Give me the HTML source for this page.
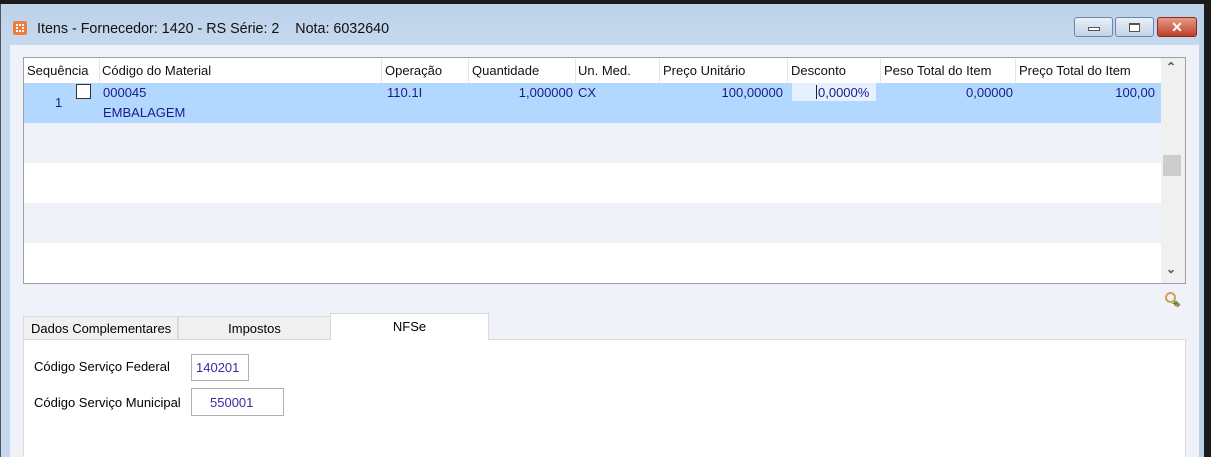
<!DOCTYPE html>
<html><head><style>
*{margin:0;padding:0;box-sizing:border-box}
body{width:1211px;height:457px;overflow:hidden;background:#bed3ea;font-family:"Liberation Sans",sans-serif;font-size:13px;color:#000;position:relative}
.a{position:absolute}
.hd{top:58px;height:25px;line-height:26px;color:#111;white-space:nowrap}
.sep{top:59px;width:1px;height:24px;background:#e4e4e4}
.c{color:#1a1a8c;white-space:nowrap}
.btn{top:17px;height:20px;border:1px solid #6e86a8;border-radius:3px;background:linear-gradient(#e9f0f8,#c3d3e6)}
</style></head><body>
<div class="a" style="left:0;top:0;width:1211px;height:4px;background:#1a1a1a"></div>
<div class="a" style="left:0;top:4px;width:1203px;height:453px;background:linear-gradient(#bcd2ea,#c6d9ee 45px);border-left:1px solid #555"></div>
<div class="a" style="left:1200px;top:4px;width:11px;height:453px;background:#1c1c1c"></div>
<div class="a" style="left:1199px;top:4px;width:5px;height:453px;background:#bcd3ea"></div>
<div class="a" style="left:13px;top:21px;width:14px;height:14px;background:#f07e3a;border-radius:2px"></div>
<div class="a" style="left:16px;top:24px;width:8px;height:8px;border:2px dotted #fff"></div>
<div class="a" style="left:37px;top:21px;font-size:14.3px;color:#111;white-space:nowrap">Itens - Fornecedor: 1420 - RS Série: 2&nbsp;&nbsp;&nbsp;&nbsp;Nota: 6032640</div>
<div class="a btn" style="left:1074px;width:39px"><div class="a" style="left:13px;top:9px;width:12px;height:4px;border:1px solid #555;background:#fff"></div></div>
<div class="a btn" style="left:1115px;width:39px"><div class="a" style="left:13px;top:5px;width:11px;height:9px;border:1px solid #555;border-top-width:2px;background:#fff"></div></div>
<div class="a" style="left:1157px;top:17px;width:40px;height:20px;border:1px solid #8a2a1a;border-radius:3px;background:linear-gradient(#e59a88,#c0402a);color:#fff;text-align:center;font-weight:bold;font-size:14px;line-height:18px">✕</div>
<div class="a" style="left:10px;top:45px;width:1189px;height:412px;background:#eff2f8"></div>
<div class="a" style="left:23px;top:57px;width:1163px;height:227px;border:1px solid #a0a0a0;background:#fff"></div>
<div class="a" style="left:24px;top:83px;width:1137px;height:40px;background:#b3d8ff"></div>
<div class="a" style="left:24px;top:123px;width:1137px;height:40px;background:#eff2f8"></div>
<div class="a" style="left:24px;top:203px;width:1137px;height:40px;background:#eff2f8"></div>
<div class="a" style="left:1161px;top:58px;width:24px;height:225px;background:#f0f0f0"></div>
<div class="a" style="left:1163px;top:155px;width:18px;height:21px;background:#cdcdcd"></div>
<div class="a" style="left:1166px;top:60px;color:#555;font-size:12px;font-weight:bold">⌃</div>
<div class="a" style="left:1166px;top:262px;color:#555;font-size:12px;font-weight:bold">⌄</div>
<div class="a hd" style="left:27px">Sequência</div><div class="a sep" style="left:99px"></div>
<div class="a hd" style="left:102px">Código do Material</div><div class="a sep" style="left:381px"></div>
<div class="a hd" style="left:385px">Operação</div><div class="a sep" style="left:468px"></div>
<div class="a hd" style="left:472px">Quantidade</div><div class="a sep" style="left:575px"></div>
<div class="a hd" style="left:578px">Un. Med.</div><div class="a sep" style="left:659px"></div>
<div class="a hd" style="left:663px">Preço Unitário</div><div class="a sep" style="left:787px"></div>
<div class="a hd" style="left:791px">Desconto</div><div class="a sep" style="left:880px"></div>
<div class="a hd" style="left:884px">Peso Total do Item</div><div class="a sep" style="left:1015px"></div>
<div class="a hd" style="left:1019px">Preço Total do Item</div>
<div class="a c" style="left:55px;top:95px">1</div>
<div class="a" style="left:76px;top:84px;width:15px;height:15px;border:1px solid #333;background:#fff"></div>
<div class="a c" style="left:103px;top:85px">000045</div>
<div class="a c" style="left:103px;top:105px">EMBALAGEM</div>
<div class="a c" style="left:387px;top:85px">110.1I</div>
<div class="a c" style="left:473px;top:85px;width:100px;text-align:right">1,000000</div>
<div class="a c" style="left:578px;top:85px">CX</div>
<div class="a c" style="left:660px;top:85px;width:123px;text-align:right">100,00000</div>
<div class="a" style="left:792px;top:83px;width:84px;height:18px;background:#e5f1ff"></div>
<div class="a" style="left:816px;top:85px;width:1px;height:14px;background:#222"></div>
<div class="a c" style="left:818px;top:85px">0,0000%</div>
<div class="a c" style="left:880px;top:85px;width:133px;text-align:right">0,00000</div>
<div class="a c" style="left:1016px;top:85px;width:139px;text-align:right">100,00</div>
<div class="a" style="left:1165px;top:292px;width:11px;height:11px;border:2px solid #d4a050;border-radius:50%"></div>
<div class="a" style="left:1174px;top:302px;width:6px;height:4px;background:#c08040;transform:rotate(45deg)"></div>
<div class="a" style="left:1172px;top:299px;color:#2a9a3a;font-weight:bold;font-size:10px">+</div>
<div class="a" style="left:23px;top:339px;width:1163px;height:118px;background:#fff;border:1px solid #dadada;border-bottom:none"></div>
<div class="a" style="left:23px;top:316px;width:155px;height:24px;background:#f0f0f0;border:1px solid #dadada;line-height:23px;padding-left:7px">Dados Complementares</div>
<div class="a" style="left:178px;top:316px;width:153px;height:24px;background:#f0f0f0;border:1px solid #dadada;line-height:23px;text-align:center">Impostos</div>
<div class="a" style="left:330px;top:313px;width:159px;height:27px;background:#fff;border:1px solid #dadada;border-bottom:none;line-height:25px;text-align:center">NFSe</div>
<div class="a" style="left:34px;top:359px">Código Serviço Federal</div>
<div class="a c" style="left:191px;top:354px;width:58px;height:27px;border:1px solid #b0b0b0;line-height:26px;padding-left:4px;color:#3a2aa0">140201</div>
<div class="a" style="left:34px;top:395px">Código Serviço Municipal</div>
<div class="a c" style="left:191px;top:388px;width:93px;height:28px;border:1px solid #b0b0b0;line-height:27px;padding-left:18px;color:#3a2aa0">550001</div>
</body></html>
